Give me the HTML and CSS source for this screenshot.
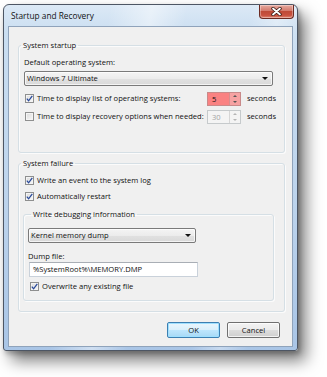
FILE: index.html
```html
<!DOCTYPE html>
<html>
<head>
<meta charset="utf-8">
<link rel="stylesheet" href="styles.css">
</head>
<body>
<div class="window">
  <div class="titlebar">
    <span class="title">Startup and Recovery</span>
    <div class="close">
      <svg width="11" height="9" viewBox="0 0 11 9">
        <path d="M2 1.5 L9 7.5 M9 1.5 L2 7.5" stroke="#3a1a14" stroke-width="3.4" stroke-linecap="round"/>
        <path d="M2 1.5 L9 7.5 M9 1.5 L2 7.5" stroke="#ffffff" stroke-width="1.8" stroke-linecap="round"/>
      </svg>
    </div>
  </div>
  <div class="client">
    <fieldset class="group g1">
      <legend>System startup</legend>
      <div class="label first">Default operating system:</div>
      <div class="combo combo1"><span>Windows 7 Ultimate</span><span class="arrow"></span></div>
      <div class="row spinrow r1">
        <span class="check on"><svg width="7" height="7" viewBox="0 0 7 7"><path d="M0.8 3.6 L2.6 5.8 L6.3 0.8" fill="none" stroke="#2a4a9a" stroke-width="1.3"/></svg></span>
        <span class="text grow">Time to display list of operating systems:</span>
        <span class="spin red"><span class="val">5</span><span class="ud"><span class="up"></span><span class="dn"></span></span></span>
        <span class="text">seconds</span>
      </div>
      <div class="row spinrow r2">
        <span class="check"></span>
        <span class="text grow">Time to display recovery options when needed:</span>
        <span class="spin dis"><span class="val">30</span><span class="ud"><span class="up"></span><span class="dn"></span></span></span>
        <span class="text">seconds</span>
      </div>
    </fieldset>
    <fieldset class="group g2">
      <legend>System failure</legend>
      <div class="row cb r3">
        <span class="check on"><svg width="7" height="7" viewBox="0 0 7 7"><path d="M0.8 3.6 L2.6 5.8 L6.3 0.8" fill="none" stroke="#2a4a9a" stroke-width="1.3"/></svg></span>
        <span class="text">Write an event to the system log</span>
      </div>
      <div class="row cb r4">
        <span class="check on"><svg width="7" height="7" viewBox="0 0 7 7"><path d="M0.8 3.6 L2.6 5.8 L6.3 0.8" fill="none" stroke="#2a4a9a" stroke-width="1.3"/></svg></span>
        <span class="text">Automatically restart</span>
      </div>
      <fieldset class="group inner">
        <legend>Write debugging information</legend>
        <div class="combo combo2"><span>Kernel memory dump</span><span class="arrow"></span></div>
        <div class="label dump">Dump file:</div>
        <div class="textbox">%SystemRoot%\MEMORY.DMP</div>
        <div class="row cb r5">
          <span class="check on"><svg width="7" height="7" viewBox="0 0 7 7"><path d="M0.8 3.6 L2.6 5.8 L6.3 0.8" fill="none" stroke="#2a4a9a" stroke-width="1.3"/></svg></span>
          <span class="text">Overwrite any existing file</span>
        </div>
      </fieldset>
    </fieldset>
    <div class="buttons">
      <div class="btn ok">OK</div>
      <div class="btn">Cancel</div>
    </div>
  </div>
</div>
</body>
</html>
```

FILE: styles.css
```css
* { box-sizing: border-box; }
html, body { margin: 0; padding: 0; background: #ffffff; }
body {
  width: 327px;
  height: 377px;
  overflow: hidden;
  font-family: "Open Sans", "Noto Sans", sans-serif;
  font-size: 7.6px;
  line-height: 11px;
  color: #111;
  white-space: nowrap;
}
.window {
  margin: 4px 0 0 3px;
  width: 295px;
  height: 347px;
  border: 1px solid #4d5664;
  border-radius: 6px 6px 3px 3px;
  padding: 0 4px 3px 4px;
  display: flex;
  flex-direction: column;
  background:
    linear-gradient(100deg, rgba(255,255,255,0) 30%, rgba(255,255,255,0.45) 42%, rgba(255,255,255,0) 52%, rgba(255,255,255,0) 70%, rgba(255,255,255,0.35) 78%, rgba(255,255,255,0) 86%),
    linear-gradient(#dce9f6 0, #cadef1 8%, #bcd3ec 60%, #a9c5e6 100%);
  box-shadow: 8px 10px 16px rgba(0,0,0,0.5), 2px 3px 5px rgba(0,0,0,0.25);
}
.titlebar {
  height: 21px;
  display: flex;
  align-items: flex-start;
  justify-content: space-between;
}
.title {
  margin: 5px 0 0 3px;
  font-size: 8.3px;
  color: #111;
}
.close {
  margin-right: -1px;
  width: 35px;
  height: 14px;
  border: 1px solid #6b2a22;
  border-top: none;
  border-radius: 0 0 4px 4px;
  background: linear-gradient(#e7aa9f 0, #d3796b 45%, #bf4a37 50%, #c9523f 80%, #e08a76 100%);
  display: flex;
  align-items: center;
  justify-content: center;
  box-shadow: inset 0 0 0 1px rgba(255,255,255,0.35);
}
.close svg { display: block; }
.client {
  flex: 1;
  background: #f0f0f0;
  border: 1px solid #8fa3bb;
  padding: 13px 7px 0 9px;
  display: flex;
  flex-direction: column;
}
.group {
  margin: 0;
  border: 1px solid #d5dfe5;
  border-radius: 3px;
  box-shadow: inset 1px 1px 0 #fbfbfb, 1px 1px 0 #fbfbfb;
  min-inline-size: 0;
}
.group legend {
  padding: 0 2px;
  margin-left: -3px;
  line-height: 11px;
}
.g1 { padding: 0 8px 28px 5px; }
.g2 { margin-top: 5px; padding: 0 8px 10px 5px; }
.label.first { margin-top: 6px; }
.combo {
  height: 15px;
  border: 1px solid #7a7a7a;
  border-radius: 2px;
  background: linear-gradient(#f4f4f4 0, #ececec 50%, #e1e1e1 51%, #d9d9d9 100%);
  box-shadow: inset 0 0 0 1px rgba(255,255,255,0.7);
  display: flex;
  align-items: center;
  justify-content: space-between;
  padding: 0 4px 0 2px;
}
.combo1 { margin: 2.5px 3px 0 0; }
.arrow {
  width: 0;
  height: 0;
  border-left: 3px solid transparent;
  border-right: 3px solid transparent;
  border-top: 3px solid #111;
}
.row { display: flex; align-items: center; }
.spinrow { height: 14px; }
.r1 { margin-top: 6px; }
.r2 { margin-top: 4px; }
.check {
  width: 9px;
  height: 9px;
  margin: 0 3px 0 1px;
  border: 1px solid #8e8f8f;
  background: linear-gradient(135deg, #dadada, #f8f8f8);
  box-shadow: inset 0 0 0 1px #f4f4f4;
  display: flex;
  align-items: center;
  justify-content: center;
  flex: none;
}
.check svg { display: block; }
.grow { flex: 1; }
.spin {
  width: 34px;
  height: 14px;
  margin-right: 6px;
  display: flex;
  border: 1px solid #c98a8a;
}
.spin .val { flex: 1; padding-left: 4px; line-height: 12px; }
.spin .ud { width: 11px; display: flex; flex-direction: column; border-left: 1px solid rgba(0,0,0,0.12); }
.spin .up, .spin .dn { flex: 1; display: flex; align-items: center; justify-content: center; }
.spin .up::after {
  content: ""; border-left: 2px solid transparent; border-right: 2px solid transparent; border-bottom: 2px solid #555;
}
.spin .dn::after {
  content: ""; border-left: 2px solid transparent; border-right: 2px solid transparent; border-top: 2px solid #555;
}
.spin.red { background: #fa8282; }
.spin.red .ud { background: #f6a2a2; }
.spin.dis { background: #f4f4f4; border-color: #c6cacc; color: #a4a4a4; }
.spin.dis .up::after { border-bottom-color: #b5b5b5; }
.spin.dis .dn::after { border-top-color: #b5b5b5; }
.cb { height: 12px; }
.r3 { margin-top: 5.5px; }
.r4 { margin-top: 4px; }
.inner {
  margin: 6.5px 2px 0 -1px;
  padding: 0 4px 7px 4px;
}
.inner legend { margin-left: 3px; }
.combo2 { width: 168px; margin-top: 8.5px; padding-left: 2px; }
.label.dump { margin-top: 7.5px; }
.textbox {
  width: 169px;
  height: 15px;
  margin-left: 1px;
  background: #fff;
  border: 1px solid #c9d1da;
  border-top-color: #a9aeb5;
  padding-left: 3px;
  line-height: 13px;
}
.r5 { margin-top: 4px; margin-left: 1px; }
.buttons {
  display: flex;
  justify-content: flex-end;
  gap: 7px;
  margin: 10px 5px 0 0;
}
.btn {
  width: 53px;
  height: 16px;
  border: 1px solid #707070;
  border-radius: 2px;
  background: linear-gradient(#f3f3f3 0, #ebebeb 50%, #dddddd 51%, #cfcfcf 100%);
  box-shadow: inset 0 0 0 1px rgba(255,255,255,0.75);
  text-align: center;
  line-height: 14px;
}
.btn.ok {
  border-color: #3c7fb1;
  background: linear-gradient(#eaf6fd 0, #d9f0fc 50%, #bee6fd 51%, #a7d9f5 100%);
  box-shadow: inset 0 0 0 1px #9fe0ff;
}
```
